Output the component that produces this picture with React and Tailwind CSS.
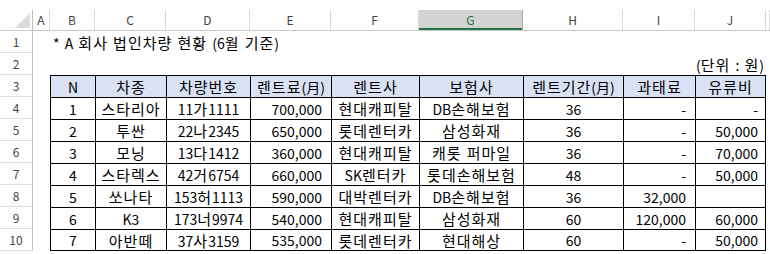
const COLS = ["A", "B", "C", "D", "E", "F", "G", "H", "I", "J", ""];
const WIDTHS = ["w-[17px]", "w-[45px]", "w-[71px]", "w-[84px]", "w-[81px]", "w-[88px]", "w-[104px]", "w-[100px]", "w-[72px]", "w-[71px]", "flex-1"];

const HEAD = ["N", "차종", "차량번호", "렌트료(月)", "렌트사", "보험사", "렌트기간(月)", "과태료", "유류비"];

const DATA = [
  ["1", "스타리아", "11가1111", "700,000", "현대캐피탈", "DB손해보험", "36", "-", "-"],
  ["2", "투싼", "22나2345", "650,000", "롯데렌터카", "삼성화재", "36", "-", "50,000"],
  ["3", "모닝", "13다1412", "360,000", "현대캐피탈", "캐롯 퍼마일", "36", "-", "70,000"],
  ["4", "스타렉스", "42거6754", "660,000", "SK렌터카", "롯데손해보험", "48", "-", "50,000"],
  ["5", "쏘나타", "153허1113", "590,000", "대박렌터카", "DB손해보험", "36", "32,000", ""],
  ["6", "K3", "173너9974", "540,000", "현대캐피탈", "삼성화재", "60", "120,000", "60,000"],
  ["7", "아반떼", "37사3159", "535,000", "롯데렌터카", "현대해상", "60", "-", "50,000"],
];

// alignment per table column (B..J)
const ALIGN = [
  "justify-center",
  "justify-center",
  "justify-center",
  "justify-end pr-[9px]",
  "justify-center",
  "justify-center",
  "justify-center",
  "justify-end pr-[9px]",
  "justify-end pr-[7px]",
];

function K({ children }) {
  const parts = String(children).split(/([\uAC00-\uD7A3]+)/);
  return (
    <span className="whitespace-pre">
      {parts.map((p, i) =>
        /[\uAC00-\uD7A3]/.test(p) ? (
          <span key={i} className="text-[15px] tracking-[1px]">{p}</span>
        ) : (
          <span key={i} className="[word-spacing:2px]">{p}</span>
        )
      )}
    </span>
  );
}

function RowHead({ n }) {
  return (
    <div className="w-[33px] shrink-0 h-[22px] flex items-center justify-center text-[12px] text-[#444] border-r border-r-[#bfbfbf] border-b border-b-[#dedede] bg-white">
      {n}
    </div>
  );
}

function ColumnHeader() {
  return (
    <div className="flex h-[21px] border-b border-[#c8c8c8] bg-white">
      <div className="w-[33px] shrink-0 relative border-r border-[#bfbfbf]">
        <div className="absolute right-[2px] bottom-[2px] w-0 h-0 border-l-[15px] border-l-transparent border-b-[15px] border-b-[#dcdcdc]" />
      </div>
      {COLS.map((c, i) => (
        <div
          key={i}
          className={
            WIDTHS[i] +
            " shrink-0 flex items-center justify-center text-[12px] border-r " +
            (c === "G"
              ? "bg-[#d3d3d3] text-[#217346] border-[#ababab] shadow-[inset_0_-2px_0_#217346]"
              : "text-[#444] border-[#dadada]")
          }
        >
          {c}
        </div>
      ))}
    </div>
  );
}

function TableRow({ cells, n, head, last }) {
  return (
    <div className="flex">
      <RowHead n={n} />
      <div className="w-[17px] shrink-0" />
      {cells.map((v, i) => (
        <div
          key={i}
          className={
            WIDTHS[i + 1] +
            " shrink-0 h-[22px] flex items-center border-t border-l border-black " +
            (head ? "justify-center bg-[#d9e1f2]" : ALIGN[i]) +
            (i === 8 ? " border-r" : "") +
            (last ? " border-b" : "")
          }
        >
          <K>{v}</K>
        </div>
      ))}
      <div className="flex-1" />
    </div>
  );
}

export default function App() {
  return (
    <div
      className="w-[770px] h-[254px] overflow-hidden bg-white text-[14px] text-black leading-none"
      style={{ fontFamily: '"Noto Sans CJK KR", "Noto Sans", sans-serif' }}
    >
      <div className="h-[10px] bg-white" />
      <ColumnHeader />
      <div className="flex">
        <RowHead n={1} />
        <div className="flex-1 flex items-center pl-[20px]">
          <K>* A 회사 법인차량 현황 (6월 기준)</K>
        </div>
      </div>
      <div className="flex">
        <RowHead n={2} />
        <div className="w-[733px] shrink-0 flex items-center justify-end pr-[2px]">
          <K>(단위 : 원)</K>
        </div>
      </div>
      <TableRow n={3} cells={HEAD} head />
      {DATA.map((r, i) => (
        <TableRow key={i} n={i + 4} cells={r} last={i === DATA.length - 1} />
      ))}
    </div>
  );
}
